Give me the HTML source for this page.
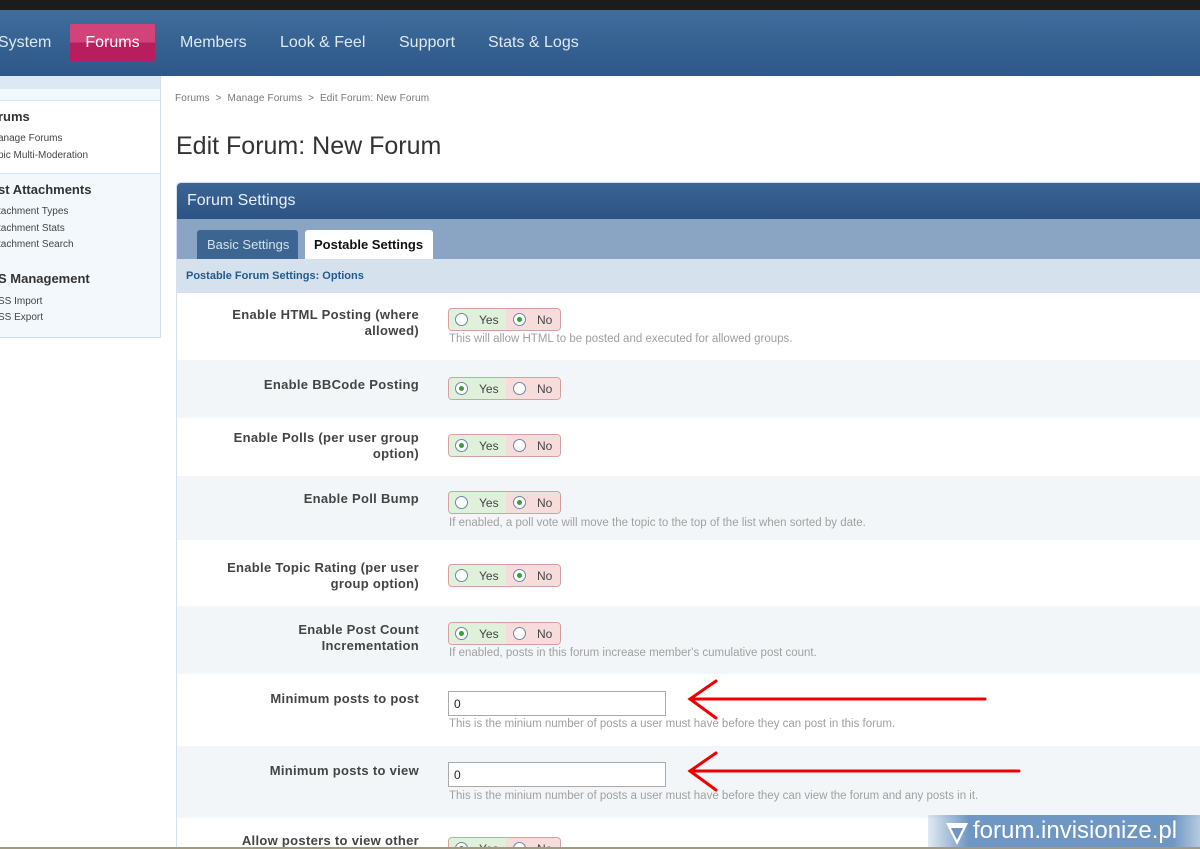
<!DOCTYPE html>
<html><head><meta charset="utf-8"><style>
*{margin:0;padding:0;box-sizing:border-box}
html,body{width:1200px;height:849px;overflow:hidden}
body{background:#fff;font-family:"Liberation Sans",sans-serif;position:relative}
.top{position:absolute;left:0;top:0;width:1200px;height:10px;background:#1c1c1c}
.nav{position:absolute;left:0;top:10px;width:1200px;height:66px;background:linear-gradient(#3f6d9c,#2d5788)}
.nav span{position:absolute;top:24px;color:#dfe8f2;font-size:16px}
.nav .act{left:70px;top:14px;width:85px;height:37px;background:linear-gradient(#d2437a 50%,#b81e5e 50%);border-radius:2px;color:#fff;text-align:center;padding-top:10px}
.side{position:absolute;left:0;top:76px;width:161px;height:262px;background:#f2f8fc;border-right:1px solid #cfe0ec;border-bottom:1px solid #cfe0ec}
.side .hd{position:absolute;left:0;top:0;width:160px;height:13px;background:#dce9f4}
.side .box{position:absolute;left:0;width:160px;background:#fff;border-top:1px solid #d6e6f1;border-bottom:1px solid #d6e6f1}
.side h4{position:absolute;font-size:13px;color:#333;left:-2px}
.side a{position:absolute;font-size:10px;color:#444;left:-2px}
.crumb{position:absolute;left:175px;top:93px;font-size:10px;color:#777;letter-spacing:.15px}
h1{position:absolute;left:176px;top:132px;font-size:25px;font-weight:normal;color:#333}
.panel{position:absolute;left:176px;top:182px;width:1030px;height:700px;border:1px solid #d5e2ee;border-radius:4px 0 0 0}
.ph{position:absolute;left:0;top:0;width:100%;height:36px;background:linear-gradient(#3b6594,#2c5384);color:#e9eff5;font-size:16px;padding:9px 0 0 10px;border-radius:4px 0 0 0}
.tabs{position:absolute;left:0;top:36px;width:100%;height:40px;background:#8aa5c3}
.tab1{position:absolute;left:20px;top:11px;width:101px;height:29px;background:#3d6591;color:#d6e1ec;font-size:13px;padding:7px 0 0 10px;border-radius:3px 3px 0 0}
.tab2{position:absolute;left:128px;top:11px;width:128px;height:29px;background:#fff;color:#111;font-size:13px;font-weight:bold;padding:7px 0 0 9px;border-radius:3px 3px 0 0}
.sub{position:absolute;left:0;top:76px;width:100%;height:34px;background:#d5e2ee;color:#215a8e;font-size:11px;font-weight:bold;padding:11px 0 0 9px}
.row{position:absolute;left:177px;width:1023px}
.g{background:#f3f6f9}
.lbl{position:absolute;right:781px;width:220px;text-align:right;font-size:13px;font-weight:bold;color:#444;line-height:16px;letter-spacing:.3px}
.rg{position:absolute;left:271px;width:113px;height:23px;border:1px solid #d4a0a0;border-radius:4px;overflow:hidden;font-size:12px;color:#444}
.rg .y{position:absolute;left:0;top:0;width:57px;height:23px;background:#dff1da}
.rg .n{position:absolute;left:57px;top:0;width:56px;height:23px;background:#f7dcdc}
.r{position:absolute;top:4px;width:13px;height:13px;border-radius:50%;border:1px solid #6c87a6;background:#fff}
.r.on:after{content:"";position:absolute;left:3px;top:3px;width:5px;height:5px;border-radius:50%;background:#3a9c3a}
.t{position:absolute;top:4px}
.help{position:absolute;left:272px;font-size:11.5px;color:#a0a0a0;white-space:nowrap}
.inp{position:absolute;left:271px;width:218px;height:25px;border:1px solid #aaa;font-size:12px;padding:5px 0 0 5px;color:#222;background:#fff}
.wm{position:absolute;left:928px;top:815px;width:272px;height:34px;background:linear-gradient(90deg,rgba(110,150,195,.2),#6f97c3 15%,#6f97c3 90%,rgba(110,150,195,.5));color:#fff;font-size:24px;padding:2px 0 0 45px}
</style></head><body>
<div class="top"></div>
<div class="nav"><span style="left:-2px">System</span><span class="act">Forums</span><span style="left:180px">Members</span><span style="left:280px">Look &amp; Feel</span><span style="left:399px">Support</span><span style="left:488px">Stats &amp; Logs</span></div>
<div class="side"><div class="hd"></div>
<div class="box" style="top:24px;height:74px"></div>
<h4 style="top:33px">rums</h4><a style="top:57px">anage Forums</a><a style="top:74px">pic Multi-Moderation</a>
<h4 style="top:106px">st Attachments</h4><a style="top:130px">tachment Types</a><a style="top:147px">tachment Stats</a><a style="top:163px">tachment Search</a>
<h4 style="top:195px">S Management</h4><a style="top:220px">SS Import</a><a style="top:236px">SS Export</a></div>
<div class="crumb">Forums &nbsp;&gt;&nbsp; Manage Forums &nbsp;&gt;&nbsp; Edit Forum: New Forum</div>
<h1>Edit Forum: New Forum</h1>
<div class="panel"><div class="ph">Forum Settings</div><div class="tabs"><div class="tab1">Basic Settings</div><div class="tab2">Postable Settings</div></div><div class="sub">Postable Forum Settings: Options</div></div>

<div class="row" style="top:292px;height:68px"><div class="lbl" style="top:15px">Enable HTML Posting (where allowed)</div>
<div class="rg" style="top:16px"><div class="y"><i class="r" style="left:6px"></i><span class="t" style="left:30px">Yes</span></div><div class="n"><i class="r on" style="left:7px"></i><span class="t" style="left:31px">No</span></div></div>
<div class="help" style="top:41px">This will allow HTML to be posted and executed for allowed groups.</div></div>
<div class="row g" style="top:360px;height:58px"><div class="lbl" style="top:17px">Enable BBCode Posting</div>
<div class="rg" style="top:17px"><div class="y"><i class="r on" style="left:6px"></i><span class="t" style="left:30px">Yes</span></div><div class="n"><i class="r" style="left:7px"></i><span class="t" style="left:31px">No</span></div></div></div>
<div class="row" style="top:418px;height:58px"><div class="lbl" style="top:12px">Enable Polls (per user group option)</div>
<div class="rg" style="top:16px"><div class="y"><i class="r on" style="left:6px"></i><span class="t" style="left:30px">Yes</span></div><div class="n"><i class="r" style="left:7px"></i><span class="t" style="left:31px">No</span></div></div></div>
<div class="row g" style="top:476px;height:64px"><div class="lbl" style="top:15px">Enable Poll Bump</div>
<div class="rg" style="top:15px"><div class="y"><i class="r" style="left:6px"></i><span class="t" style="left:30px">Yes</span></div><div class="n"><i class="r on" style="left:7px"></i><span class="t" style="left:31px">No</span></div></div>
<div class="help" style="top:41px">If enabled, a poll vote will move the topic to the top of the list when sorted by date.</div></div>
<div class="row" style="top:540px;height:66px"><div class="lbl" style="top:20px">Enable Topic Rating (per user group option)</div>
<div class="rg" style="top:24px"><div class="y"><i class="r" style="left:6px"></i><span class="t" style="left:30px">Yes</span></div><div class="n"><i class="r on" style="left:7px"></i><span class="t" style="left:31px">No</span></div></div></div>
<div class="row g" style="top:606px;height:68px"><div class="lbl" style="top:16px">Enable Post Count Incrementation</div>
<div class="rg" style="top:16px"><div class="y"><i class="r on" style="left:6px"></i><span class="t" style="left:30px">Yes</span></div><div class="n"><i class="r" style="left:7px"></i><span class="t" style="left:31px">No</span></div></div>
<div class="help" style="top:41px">If enabled, posts in this forum increase member's cumulative post count.</div></div>
<div class="row" style="top:674px;height:72px"><div class="lbl" style="top:17px">Minimum posts to post</div>
<div class="inp" style="top:17px">0</div><div class="help" style="top:44px">This is the minium number of posts a user must have before they can post in this forum.</div></div>
<div class="row g" style="top:746px;height:72px"><div class="lbl" style="top:17px">Minimum posts to view</div>
<div class="inp" style="top:16px">0</div><div class="help" style="top:44px">This is the minium number of posts a user must have before they can view the forum and any posts in it.</div></div>
<div class="row" style="top:818px;height:40px"><div class="lbl" style="top:15px">Allow posters to view other</div>
<div class="rg" style="top:19px"><div class="y"><i class="r on" style="left:6px"></i><span class="t" style="left:30px">Yes</span></div><div class="n"><i class="r" style="left:7px"></i><span class="t" style="left:31px">No</span></div></div></div>

<svg style="position:absolute;left:0;top:0" width="1200" height="849"><g stroke="#e00" stroke-width="3" fill="none" stroke-linecap="round"><path d="M690 699 L985 699 M716 681 L690 699 L716 718"/><path d="M690 771 L1019 771 M716 753 L690 771 L716 790"/></g></svg>
<div class="wm"><svg style="position:absolute;left:18px;top:8px" width="22" height="22"><path d="M0 0 L22 0 L11 22 Z" fill="#fff"/><path d="M5 5 L17 5 L11 17Z" fill="#6f97c3"/></svg>forum.invisionize.pl</div>
<div style="position:absolute;left:0;top:847px;width:1200px;height:2px;background:#a09a80"></div>
</body></html>
